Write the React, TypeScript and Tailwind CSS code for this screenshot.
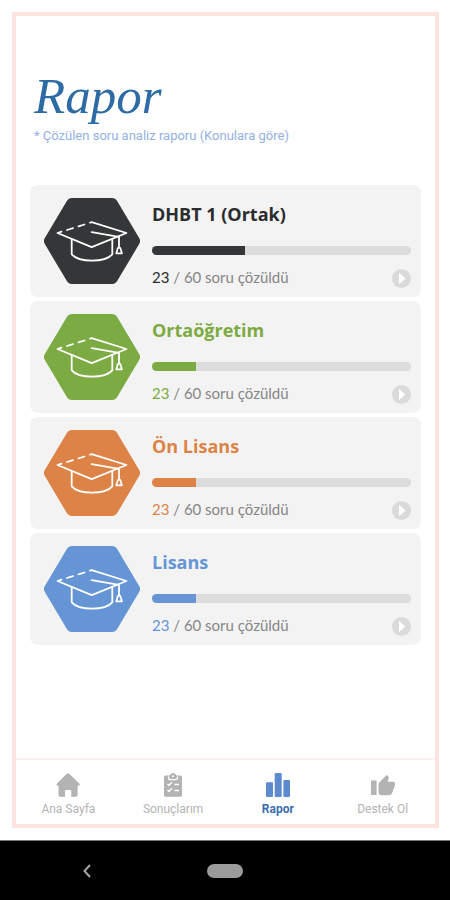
import React from "react";

type Report = {
  title: string;
  solved: number;
  total: number;
  percent: number;
  hex: string;
  text: string;
  bar: string;
};

const reports: Report[] = [
  { title: "DHBT 1 (Ortak)", solved: 23, total: 60, percent: 36, hex: "text-[#343637]", text: "text-[#2b2c2d]", bar: "bg-[#343637]" },
  { title: "Ortaöğretim", solved: 23, total: 60, percent: 17, hex: "text-[#7dab43]", text: "text-[#7dab43]", bar: "bg-[#7dab43]" },
  { title: "Ön Lisans", solved: 23, total: 60, percent: 17, hex: "text-[#dd8347]", text: "text-[#dd8347]", bar: "bg-[#dd8347]" },
  { title: "Lisans", solved: 23, total: 60, percent: 17, hex: "text-[#6695d6]", text: "text-[#6695d6]", bar: "bg-[#6695d6]" },
];

function CapBadge({ className }: { className: string }) {
  return (
    <svg viewBox="0 0 96 86" className={`h-[86px] w-24 shrink-0 ${className}`} aria-hidden="true">
      <path
        d="M6 43 28 6h40l22 37-22 37H28Z"
        fill="currentColor"
        stroke="currentColor"
        strokeWidth="12"
        strokeLinejoin="round"
      />
      <g fill="none" stroke="#fff" strokeWidth="1.8" strokeLinecap="round" strokeLinejoin="round">
        <path d="M47.7 24.2 82.5 35 47.7 49.2 13.5 35l4-1.300M23 32l6-1.900M34.500 28.400l6-1.900M46 24.700l1.700-.5" />
        <path d="M27.700 41.500v14.800c3.500 4 11 6.300 20.300 6.300s16.800-2.300 20.300-6.300V41.500" />
        <path d="M47.700 34.200 75 38.800v10.500" />
        <path d="M75 49.300c-1.500 0-1.500 1.700-1.800 3l-.9 3h5.600l-.9-3c-.3-1.300-.5-3-2-3Z" />
      </g>
    </svg>
  );
}

function ReportCard({ report }: { report: Report }) {
  return (
    <li className="flex h-28 items-center gap-3 rounded-lg bg-[#f3f3f3] pr-[10px] pl-[14px]">
      <CapBadge className={report.hex} />
      <div className="min-w-0 flex-1 pt-[10px]">
        <h2 className={`font-['Open_Sans',sans-serif] text-lg leading-6 font-bold ${report.text}`}>{report.title}</h2>
        <div
          role="progressbar"
          aria-label={report.title}
          aria-valuenow={report.percent}
          aria-valuemin={0}
          aria-valuemax={100}
          className="mt-5 h-[9px] overflow-hidden rounded-full bg-[#dcdcdc]"
        >
          <div className={`h-full ${report.bar}`} style={{ width: `${report.percent}%` }} />
        </div>
        <div className="mt-3 flex h-6 items-start justify-between">
          <p className="font-[Lato,sans-serif] text-[15px] leading-5 text-[#868686]">
            <span className={report.text}>{report.solved}</span> / {report.total} soru çözüldü
          </p>
          <button type="button" aria-label={`${report.title} raporunu aç`} className="self-center">
            <svg viewBox="0 0 19 19" className="size-[19px]" aria-hidden="true">
              <circle cx="9.5" cy="9.5" r="9.5" fill="#dadada" />
              <path d="M7 3.800 13.400 9.500 7 15.200Z" fill="#fff" />
            </svg>
          </button>
        </div>
      </div>
    </li>
  );
}

function HomeIcon() {
  return (
    <svg viewBox="0 0 24 24" className="size-6" fill="currentColor" aria-hidden="true">
      <path d="M12 .3q.6 0 1.200.5L23.400 10.400q.9 1-.1 1.900l-.8.400H21.600V22q0 1.800-1.800 1.800H15.300V18q0-1-1-1H10q-1 0-1 1v5.800H4.300Q2.500 23.800 2.500 22V12.700H1.500q-1.600-.8-.5-2.300L10.800.8q.6-.5 1.200-.5Z" />
    </svg>
  );
}

function ClipboardIcon() {
  return (
    <svg viewBox="0 0 24 24" className="size-6" aria-hidden="true">
      <path fill="currentColor" d="M4.500 2.500H8.500Q9.500 0 12 0t3.500 2.500h4q1.500 0 1.500 1.500v18.300q0 1.500-1.500 1.500h-15Q3 23.800 3 22.300V4q0-1.500 1.500-1.500Z" />
      <circle cx="12" cy="3.200" r="1" fill="#fff" />
      <g fill="none" stroke="#fff" strokeWidth="1.300">
        <path d="M7.500 3.500V5q0 1.700 1.700 1.700h5.600q1.700 0 1.700-1.700V3.500" />
        <path d="m6.500 11 1.500 1.500 3-3.300M6.500 17l1.500 1.500 3-3.300M13.500 11.500h4.500M13.500 17.500h4.500" />
      </g>
    </svg>
  );
}

function BarsIcon() {
  return (
    <svg viewBox="0 0 24 24" className="size-6 text-[#5c8bd0]" fill="currentColor" aria-hidden="true">
      <rect x="0" y="9.300" width="7" height="14.700" rx="1" />
      <rect x="8.700" y="0" width="7" height="24" rx="1" />
      <rect x="17.400" y="7" width="6.600" height="17" rx="1" />
    </svg>
  );
}

function ThumbIcon() {
  return (
    <svg viewBox="0 0 24 24" className="size-6" fill="currentColor" aria-hidden="true">
      <rect x="0" y="7.500" width="5.600" height="14.500" rx=".6" />
      <path d="M7.500 11.500q0-1 .8-1.900L15.600 2q1.600.8 2 1.900.3.900 0 2L16.700 8.800H22q2.300.2 2 2.500-.1.800-.3 1.500L21 20.300q-.8 2-2.800 2H11q-3.500 0-3.500-3Z" />
    </svg>
  );
}

const tabs = [
  { label: "Ana Sayfa", Icon: HomeIcon, active: false },
  { label: "Sonuçlarım", Icon: ClipboardIcon, active: false },
  { label: "Rapor", Icon: BarsIcon, active: true },
  { label: "Destek Ol", Icon: ThumbIcon, active: false },
];

export default function App() {
  return (
    <div className="flex min-h-screen flex-col bg-white">
      <div className="my-3 mr-[11px] ml-3 flex flex-1 flex-col border-4 border-[#fee4e0]">
        <header className="px-[18px] pt-[50px]">
          <h1 className="font-['Liberation_Serif',serif] text-[51px] leading-[60px] text-[#2d6ba5] italic">Rapor</h1>
          <p className="font-[Roboto,sans-serif] text-[13px] leading-5 text-[#93b1e4]">
            * Çözülen soru analiz raporu (Konulara göre)
          </p>
        </header>
        <main className="flex-1 px-[14px] pt-[39px] pb-6">
          <ul className="flex flex-col gap-1">
            {reports.map((r) => (
              <ReportCard key={r.title} report={r} />
            ))}
          </ul>
        </main>
        <nav className="grid grid-cols-4 border-t-2 border-[#fff0ea] pt-[13px] pb-[7px]">
          {tabs.map(({ label, Icon, active }) => (
            <a
              key={label}
              href="#"
              aria-current={active ? "page" : undefined}
              className={`flex flex-col items-center gap-1 font-[Roboto,sans-serif] text-xs leading-4 ${
                active ? "font-bold text-[#3c6eae]" : "text-[#b3b3b3]"
              }`}
            >
              <Icon />
              {label}
            </a>
          ))}
        </nav>
      </div>
      <footer className="grid h-[60px] grid-cols-[1fr_36px_1fr] items-center border-t border-[#777] bg-black pr-0 text-[#a5a5a5]">
        <button type="button" aria-label="Geri" className="ml-20 w-4">
          <svg viewBox="0 0 16 16" className="size-4" fill="none" stroke="currentColor" strokeWidth="2" aria-hidden="true">
            <path d="M10 2 4.500 8 10 14" />
          </svg>
        </button>
        <button type="button" aria-label="Ana ekran" className="h-[14px] rounded-full bg-[#9b9b9b]" />
      </footer>
    </div>
  );
}
